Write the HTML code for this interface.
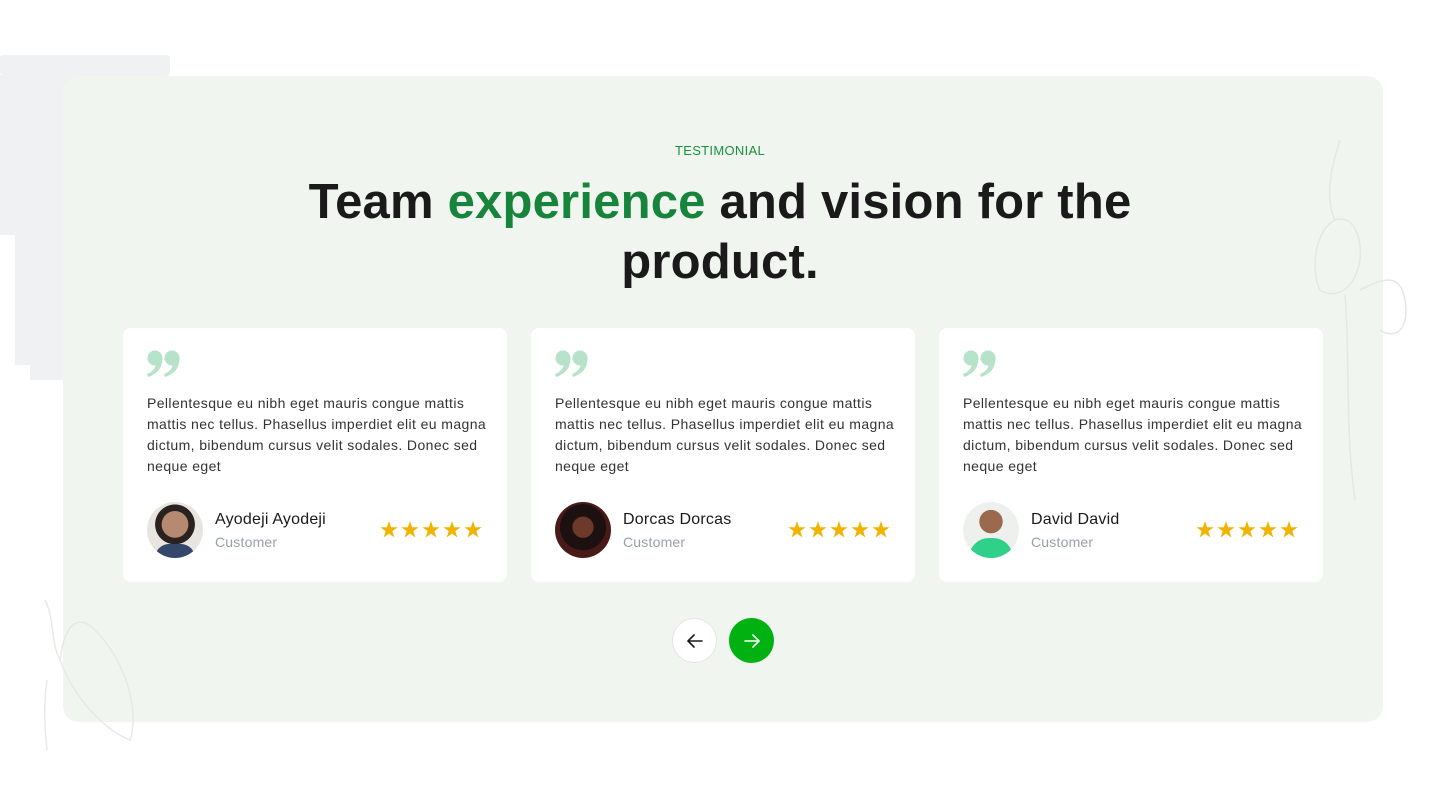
<!DOCTYPE html>
<html><head><meta charset="utf-8"><style>
*{margin:0;padding:0;box-sizing:border-box}
body{width:1440px;height:800px;background:#fff;font-family:"Liberation Sans",sans-serif;position:relative;overflow:hidden}
.brush{position:absolute;background:#f0f1f2}
.panel{position:absolute;left:63px;top:76px;width:1320px;height:646px;background:#f1f5f0;border-radius:16px}
.tag{position:absolute;top:143px;width:100%;text-align:center;color:#17923d;font-size:13px;letter-spacing:.3px}
h1{position:absolute;top:172px;left:0;width:1440px;text-align:center;font-size:49px;line-height:60px;color:#1a1a1a;font-weight:700;letter-spacing:.2px}
h1 span{color:#17843b}
.card{position:absolute;top:328px;width:384px;height:254px;background:#fff;border-radius:8px}
.q{position:absolute;left:24px;top:22px}
.txt{position:absolute;left:24px;top:65px;width:340px;font-size:14px;letter-spacing:.4px;line-height:21px;color:#333}
.av{position:absolute;left:24px;top:174px;width:56px;height:56px;border-radius:50%;overflow:hidden}
.nm{position:absolute;left:92px;top:183px;font-size:16px;color:#1a1a1a;letter-spacing:.2px}
.role{position:absolute;left:92px;top:206px;font-size:14px;color:#9aa0aa;letter-spacing:.2px}
.stars{position:absolute;left:256px;top:193px}
.btn{position:absolute;top:618px;width:45px;height:45px;border-radius:50%;display:flex;align-items:center;justify-content:center}
</style></head><body>
<div class="brush" style="left:0;top:55px;width:170px;height:20px;border-radius:3px"></div>
<div class="brush" style="left:0;top:75px;width:185px;height:160px;border-radius:0 20px 10px 0"></div>
<div class="brush" style="left:15px;top:235px;width:180px;height:130px;border-radius:0 30px 40px 0"></div>
<div class="brush" style="left:30px;top:365px;width:40px;height:15px"></div>
<div class="panel"></div>
<svg style="position:absolute;left:1300px;top:130px" width="120" height="380" fill="none" stroke="#e3e8e2" stroke-width="1.5"><path d="M40 10C30 40 25 70 35 90C15 100 10 140 20 160C35 170 55 160 60 130C62 100 50 85 35 90M45 165C50 220 45 300 55 370M60 160C80 150 100 140 105 170C110 200 95 210 80 200"/></svg>
<svg style="position:absolute;left:35px;top:590px" width="110" height="165" fill="none" stroke="#e6eae6" stroke-width="1.5"><path d="M10 10C20 30 15 50 25 70C40 110 70 140 95 150C105 120 90 70 60 40C45 25 30 30 25 70M12 90C8 120 10 140 12 160"/></svg>
<div class="tag">TESTIMONIAL</div>
<h1>Team <span>experience</span> and vision for the<br>product.</h1>

<svg width="0" height="0" style="position:absolute"><defs><path id="st" d="M9 0L11.1 6.3H17.6L12.3 10.1L14.4 16.5L9 12.6L3.6 16.5L5.7 10.1L0.4 6.3H6.9Z" fill="#f0b400"/><g id="q"><g fill="#b5e2c8"><circle cx="8" cy="8" r="7.5"/><path d="M15.5 8C15.5 18 10 24 1 27L0 24C6 22 9 17 9 13Z"/><circle cx="25" cy="8" r="7.5"/><path d="M32.5 8C32.5 18 27 24 18 27L17 24C23 22 26 17 26 13Z"/></g></g><g id="s5"><use href="#st" x="1"/><use href="#st" x="22"/><use href="#st" x="43"/><use href="#st" x="64"/><use href="#st" x="85"/></g></defs></svg>

<div class="card" style="left:123px">
<svg class="q" width="33" height="27"><use href="#q"/></svg>
<div class="txt">Pellentesque eu nibh eget mauris congue mattis mattis nec tellus. Phasellus imperdiet elit eu magna dictum, bibendum cursus velit sodales. Donec sed neque eget</div>
<div class="av" style="background:radial-gradient(circle at 50% 40%,#b58a70 0 30%,#2a2220 31% 45%,#e8e4df 46%)"><div style="position:absolute;bottom:0;left:8px;width:40px;height:14px;background:#34476a;border-radius:20px 20px 0 0"></div></div>
<div class="nm">Ayodeji Ayodeji</div><div class="role">Customer</div>
<svg class="stars" width="106" height="18"><use href="#s5"/></svg></div>

<div class="card" style="left:531px">
<svg class="q" width="33" height="27"><use href="#q"/></svg>
<div class="txt">Pellentesque eu nibh eget mauris congue mattis mattis nec tellus. Phasellus imperdiet elit eu magna dictum, bibendum cursus velit sodales. Donec sed neque eget</div>
<div class="av" style="background:radial-gradient(circle at 50% 45%,#6b3a2a 0 25%,#1c1010 26% 55%,#4a1a18 56%)"></div>
<div class="nm">Dorcas Dorcas</div><div class="role">Customer</div>
<svg class="stars" width="106" height="18"><use href="#s5"/></svg></div>

<div class="card" style="left:939px">
<svg class="q" width="33" height="27"><use href="#q"/></svg>
<div class="txt">Pellentesque eu nibh eget mauris congue mattis mattis nec tellus. Phasellus imperdiet elit eu magna dictum, bibendum cursus velit sodales. Donec sed neque eget</div>
<div class="av" style="background:radial-gradient(circle at 50% 35%,#9b6a4e 0 25%,#eef0ee 26%)"><div style="position:absolute;bottom:0;left:6px;width:44px;height:20px;background:#2ed08a;border-radius:20px 20px 0 0"></div></div>
<div class="nm">David David</div><div class="role">Customer</div>
<svg class="stars" width="106" height="18"><use href="#s5"/></svg></div>

<div class="btn" style="left:672px;background:#fff;border:1px solid #e4e6e4"><svg width="20" height="20" viewBox="0 0 20 20" fill="none" stroke="#1a1a1a" stroke-width="1.6" stroke-linecap="round"><path d="M17 10H3M9 4L3 10L9 16"/></svg></div>
<div class="btn" style="left:729px;background:#00b112"><svg width="20" height="20" viewBox="0 0 20 20" fill="none" stroke="#fff" stroke-width="1.6" stroke-linecap="round"><path d="M3 10H17M11 4L17 10L11 16"/></svg></div>
</body></html>
